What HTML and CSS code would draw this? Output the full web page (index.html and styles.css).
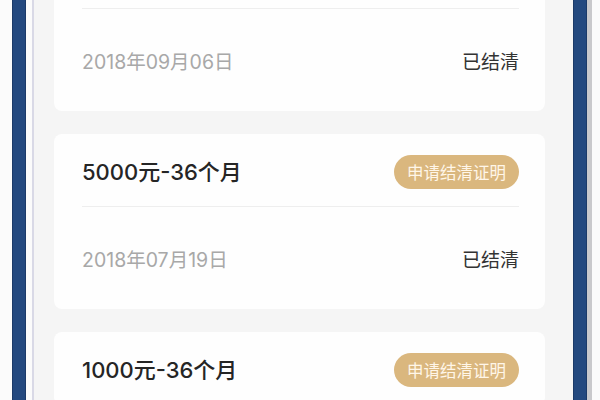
FILE: index.html
```html
<!DOCTYPE html>
<html lang="zh-CN">
<head>
<meta charset="utf-8">
<link rel="stylesheet" href="styles.css">
</head>
<body>
<div class="frame">
  <div class="edge edge-left">
    <div class="pad-white w12"></div>
    <div class="bar"></div>
    <div class="pad-white w6"></div>
    <div class="thin"></div>
  </div>
  <main class="list">
    <section class="card first">
      <div class="row head cut"></div>
      <div class="row foot">
        <span class="date">2018年09月06日</span>
        <span class="status">已结清</span>
      </div>
    </section>
    <section class="card">
      <div class="row head">
        <span class="title">5000元-36个月</span>
        <span class="badge">申请结清证明</span>
      </div>
      <div class="row foot">
        <span class="date">2018年07月19日</span>
        <span class="status">已结清</span>
      </div>
    </section>
    <section class="card">
      <div class="row head">
        <span class="title">1000元-36个月</span>
        <span class="badge">申请结清证明</span>
      </div>
    </section>
  </main>
  <div class="edge edge-right">
    <div class="bar"></div>
    <div class="grayline"></div>
    <div class="pad-white w8"></div>
  </div>
</div>
</body>
</html>
```
FILE: styles.css
```css
html, body {
  margin: 0;
  padding: 0;
  height: 400px;
  overflow: hidden;
  background: #f5f5f5;
  font-family: "Inter", "Noto Sans CJK SC", "Noto Sans", sans-serif;
}
.frame {
  display: flex;
  height: 400px;
}
.edge {
  display: flex;
  flex: none;
}
.pad-white { background: #fbfbfb; }
.w12 { width: 12px; }
.w6 { width: 6px; }
.w8 { width: 8px; }
.bar {
  width: 14px;
  background: #24497f;
  box-shadow: inset 1px 0 0 #1c3a68, inset -1px 0 0 #1c3a68;
}
.thin {
  width: 2px;
  background: #d9d9e6;
}
.grayline {
  width: 5px;
  background: #c9c9cc;
}
.list {
  flex: 1;
  display: flex;
  flex-direction: column;
  gap: 23px;
  padding: 0 28px 0 20px;
}
.card {
  flex: none;
  background: #fefefe;
  border-radius: 8px;
  display: flex;
  flex-direction: column;
}
.card.first {
  margin-top: -20px;
}
.row {
  display: flex;
  align-items: center;
  justify-content: space-between;
  margin: 0 26px 0 28px;
}
.head {
  height: 72px;
  border-bottom: 1px solid #eeeeee;
}
.head.cut {
  height: 28px;
}
.foot {
  height: 102px;
}
.title {
  font-size: 22px;
  font-weight: 500;
  color: #252525;
}
.badge {
  width: 125px;
  height: 34px;
  border-radius: 17px;
  background: #dab77e;
  color: #fff6e8;
  font-size: 16.5px;
  display: flex;
  align-items: center;
  justify-content: center;
  margin-top: 3px;
}
.date {
  font-size: 19.5px;
  color: #a8a8a8;
}
.status {
  font-size: 19px;
  color: #333333;
}
```
